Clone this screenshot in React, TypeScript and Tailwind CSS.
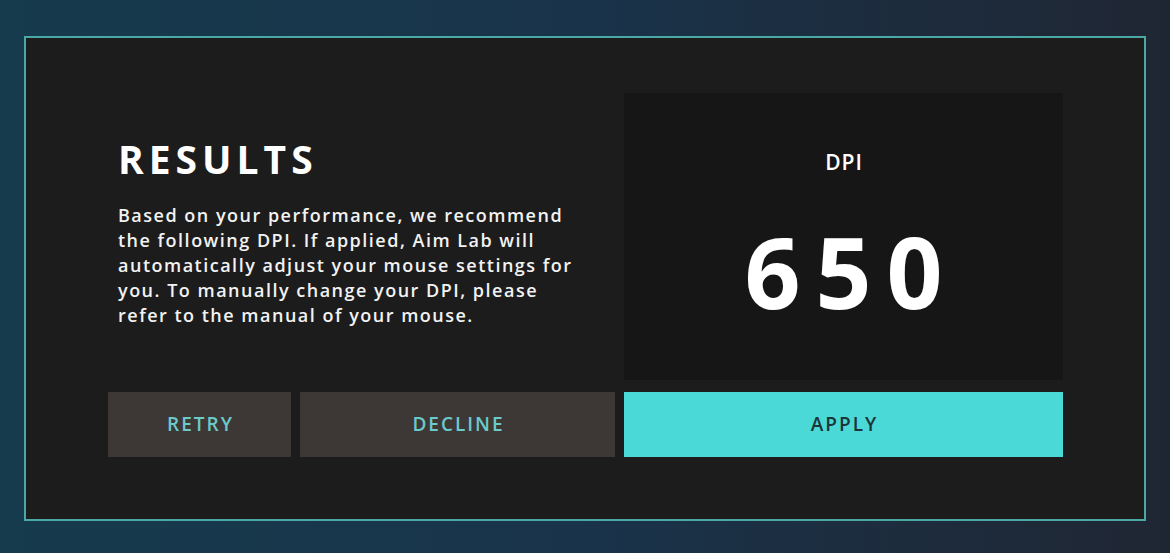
const lines = [
  "Based on your performance, we recommend",
  "the following DPI. If applied, Aim Lab will",
  "automatically adjust your mouse settings for",
  "you. To manually change your DPI, please",
  "refer to the manual of your mouse.",
];

export default function App() {
  return (
    <div
      className="w-[1170px] h-[553px] bg-gradient-to-r from-[#163b4d] via-[#19334a] to-[#1f2633] pt-[36px] pl-[24px]"
      style={{ fontFamily: '"Open Sans", "Liberation Sans", sans-serif' }}
    >
      <div className="w-[1122px] h-[485px] border-2 border-[#4aa9a5] bg-[#1c1c1c] pt-[55px] pl-[82px]">
        <div className="grid grid-cols-[507px_439px] gap-x-[9px] gap-y-[12px]">
          {/* Text + DPI */}
          <div className="pl-[10px] pt-[42px]">
            <h1 className="text-[39px] leading-[48px] font-bold tracking-[5px] text-white">RESULTS</h1>
            <p className="mt-[20px] text-[18px] leading-[25px] font-semibold tracking-[1.5px] text-[#f2f2f2] whitespace-nowrap">
              {lines.map((l) => (
                <span key={l} className="block">{l}</span>
              ))}
            </p>
          </div>
          <div className="h-[287px] bg-[#161616] flex flex-col items-center">
            <div className="mt-[55px] text-[21px] leading-[28px] font-semibold tracking-[1px] pl-[1px] text-white">DPI</div>
            <div className="mt-[40px] text-[98px] leading-[110px] font-bold tracking-[15px] pl-[15px] text-white">650</div>
          </div>

          {/* Buttons */}
          <div className="flex gap-[9px] h-[65px]">
            <button className="w-[183px] bg-[#3d3736] text-[#6ccaca] text-[19px] font-semibold tracking-[2px] pl-[2px]">RETRY</button>
            <button className="flex-1 bg-[#3d3736] text-[#6ccaca] text-[19px] font-semibold tracking-[2px] pl-[2px]">DECLINE</button>
          </div>
          <button className="h-[65px] bg-[#4bd9d8] text-[#1b3637] text-[19px] font-semibold tracking-[2px] pl-[2px]">APPLY</button>
        </div>
      </div>
    </div>
  );
}
